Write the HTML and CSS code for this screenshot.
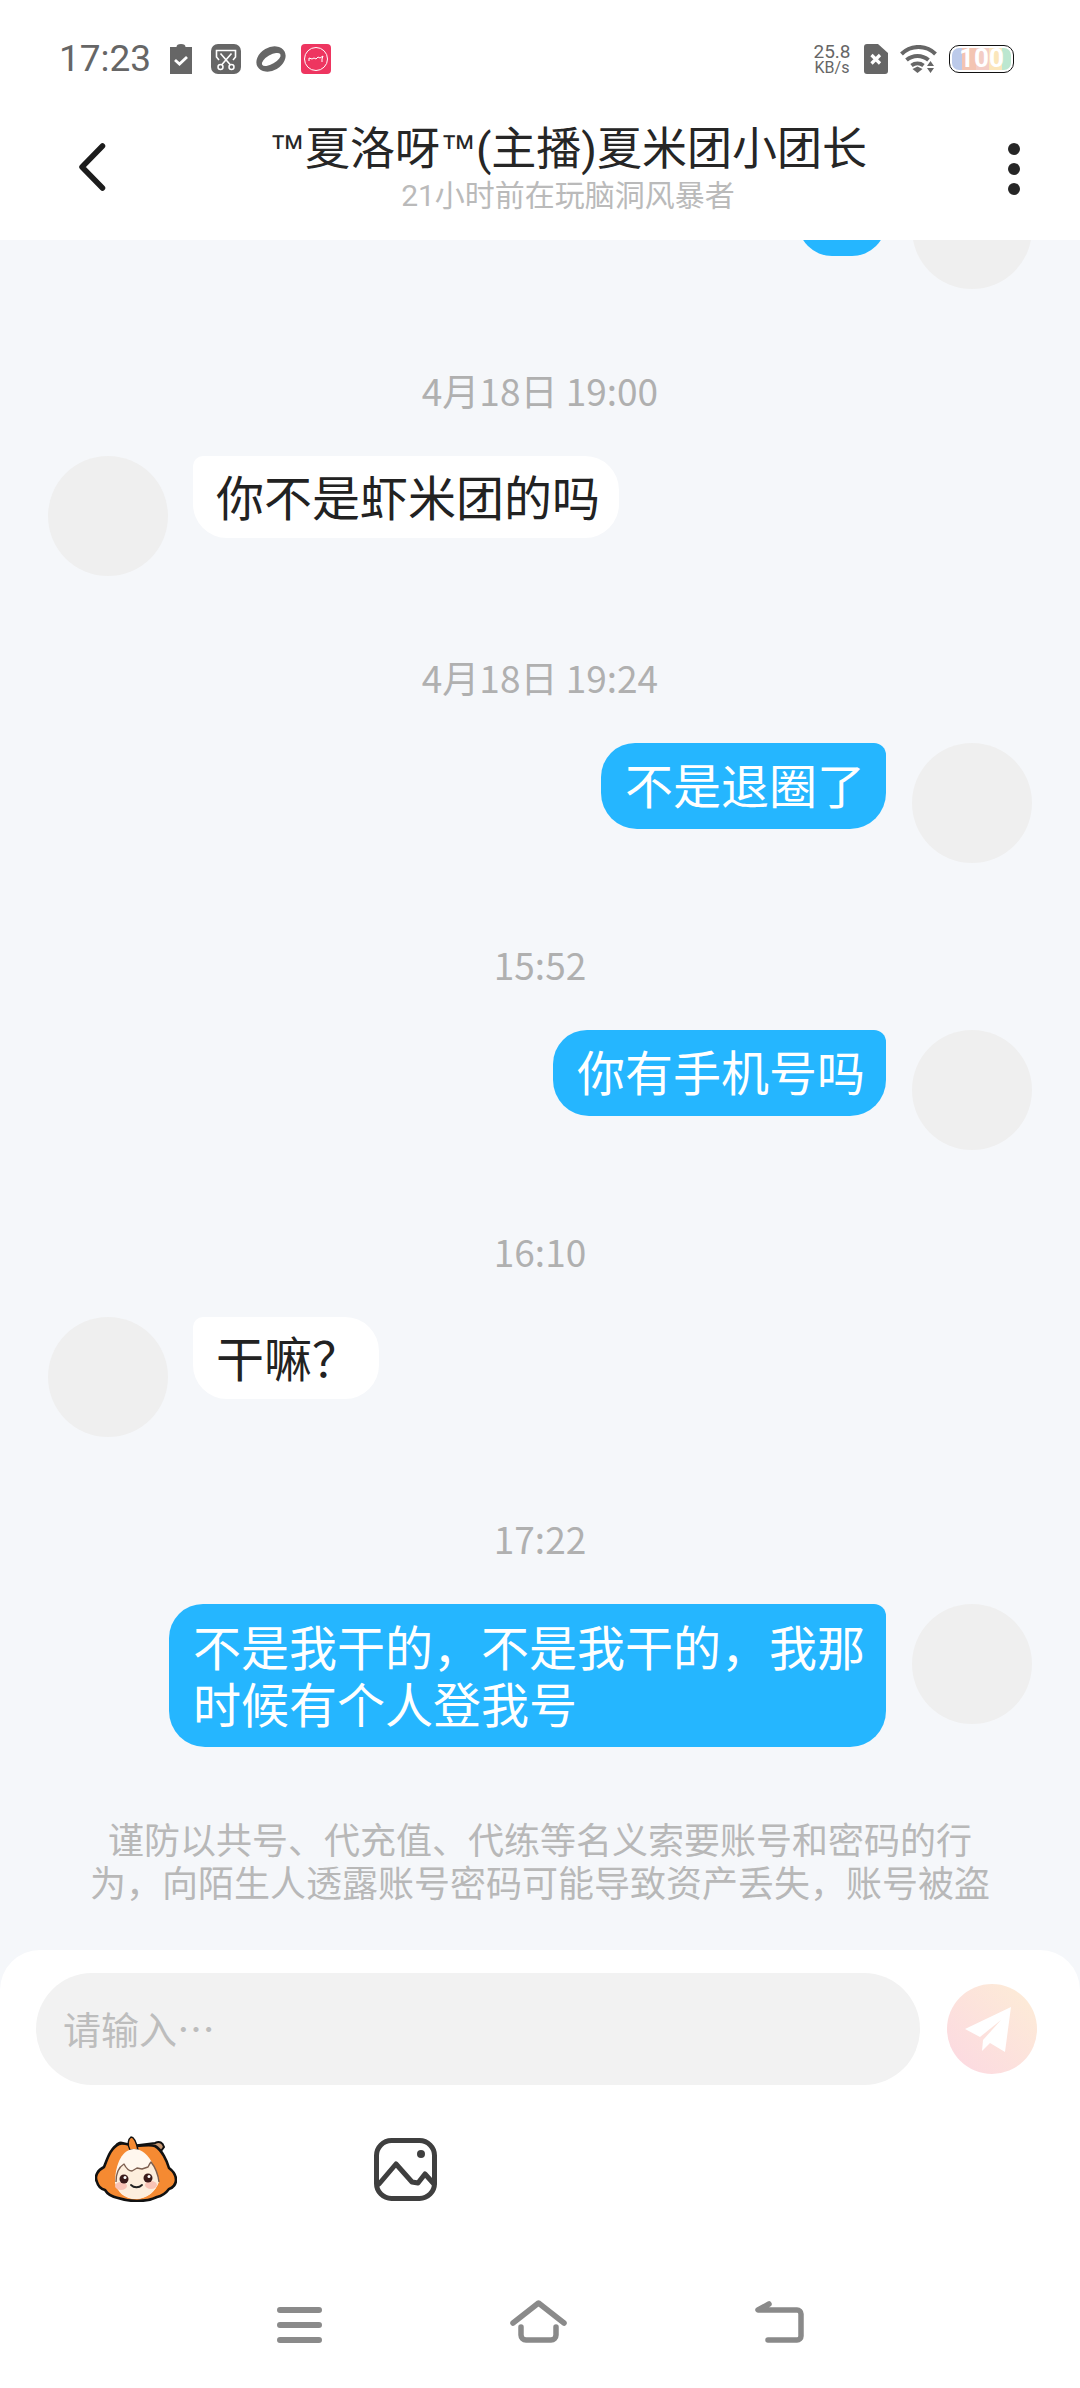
FILE: index.html
```html
<!DOCTYPE html>
<html lang="zh">
<head>
<meta charset="utf-8">
<title>Chat</title>
<link rel="stylesheet" href="styles.css">
</head>
<body>
<div class="app">
  <header class="top">
    <div class="status">
      <div class="status-left">
        <span class="clock">17:23</span>
        <svg class="ic" width="22" height="30" viewBox="0 0 22 30"><path d="M0 3h6.500a4.500 3 0 0 1 9 0H22v27H0z" fill="#666"/><path d="M5 16l4.500 4L17 13" fill="none" stroke="#fff" stroke-width="2.800"/></svg>
        <svg class="ic gap-l" width="30" height="30" viewBox="0 0 30 30"><rect width="30" height="30" rx="7" fill="#666"/><path d="M8 16l-2.500-3V6.500h19V13L22 16M9.500 9.500L19.500 21M20.500 9.500L10.500 21" fill="none" stroke="#fff" stroke-width="1.600"/><circle cx="9.500" cy="23" r="2.500" fill="#666" stroke="#fff" stroke-width="1.500"/><circle cx="20.500" cy="23" r="2.500" fill="#666" stroke="#fff" stroke-width="1.500"/></svg>
        <svg class="ic gap-m" width="30" height="26" viewBox="0 0 30 26"><g transform="rotate(-30 15 13)"><ellipse cx="15" cy="13" rx="15.500" ry="11.500" fill="#666"/><ellipse cx="15" cy="13.500" rx="10.500" ry="4.500" fill="#fff"/></g></svg>
        <svg class="ic gap-m" width="30" height="30" viewBox="0 0 30 30"><rect width="30" height="30" rx="4" fill="#ee3560"/><circle cx="15" cy="15" r="11.500" fill="none" stroke="#fff" stroke-width="1"/><path d="M8 17v-3l3 1 2-1 2 1 2-2 2 1 3-2-1 3v3" fill="none" stroke="#fff" stroke-width="1"/></svg>
      </div>
      <div class="status-right">
        <span class="speed"><b>25.8</b><i>KB/s</i></span>
        <svg width="24" height="30" viewBox="0 0 24 30"><path d="M3 0h11l10 9v18a3 3 0 0 1-3 3H3a3 3 0 0 1-3-3V3a3 3 0 0 1 3-3z" fill="#666"/><path d="M7.500 11l8.500 8.500M16 11l-8.500 8.500" stroke="#fff" stroke-width="3.200"/></svg>
        <svg class="wifi" width="37" height="28" viewBox="0 0 37 28"><path d="M1.500 9a24 24 0 0 1 34 0M6.500 15a17 17 0 0 1 22 0M11.500 20.500a10 10 0 0 1 12 0" fill="none" stroke="#666" stroke-width="4"/><path d="M12.500 24l5-2.500 5 2.500-5 4z" fill="#666"/><path d="M27 21l3.500-5 3.500 5zM27 23l3.500 5 3.500-5z" fill="#666"/></svg>
        <span class="batt"><span class="batt-fill">100</span></span>
      </div>
    </div>
    <div class="nav">
      <svg class="back" width="28" height="48" viewBox="0 0 28 48"><path d="M24.500 3L4 24l20.500 21" fill="none" stroke="#1c1c1c" stroke-width="5.500" stroke-linecap="round" stroke-linejoin="round"/></svg>
      <div class="title">
        <h1><span class="tm">™</span>夏洛呀<span class="tm">™</span>(主播)夏米团小团长</h1>
        <p>21小时前在玩脑洞风暴者</p>
      </div>
      <div class="more"><span></span><span></span><span></span></div>
    </div>
  </header>

  <main class="chat">
    <div class="clip">
      <div class="msg me"><div class="bubble stub"></div><div class="avatar"></div></div>
    </div>
    <div class="time">4月18日 19:00</div>
    <div class="msg other"><div class="avatar"></div><div class="bubble">你不是虾米团的吗</div></div>
    <div class="time">4月18日 19:24</div>
    <div class="msg me"><div class="bubble">不是退圈了</div><div class="avatar"></div></div>
    <div class="time">15:52</div>
    <div class="msg me"><div class="bubble">你有手机号吗</div><div class="avatar"></div></div>
    <div class="time">16:10</div>
    <div class="msg other"><div class="avatar"></div><div class="bubble">干嘛？</div></div>
    <div class="time">17:22</div>
    <div class="msg me"><div class="bubble wide">不是我干的，不是我干的，我那时候有个人登我号</div><div class="avatar"></div></div>
    <p class="warn">谨防以共号、代充值、代练等名义索要账号和密码的行为，向陌生人透露账号密码可能导致资产丢失，账号被盗</p>
  </main>

  <footer class="bottom">
    <div class="input-row">
      <div class="input">请输入…</div>
      <svg class="send" width="90" height="90" viewBox="0 0 90 90">
        <defs><linearGradient id="sendGrad" x1="0" y1="1" x2="1" y2="0"><stop offset="0" stop-color="#fcd8e2"/><stop offset="1" stop-color="#fdedd6"/></linearGradient></defs>
        <circle cx="45" cy="45" r="45" fill="url(#sendGrad)"/>
        <path d="M64 23L18 45l15 8 21-17-18 20-1 11 8-8 15 9z" fill="#fff"/>
      </svg>
    </div>
    <div class="tools">
      <svg width="82" height="67" viewBox="0 0 82 67">
        <path d="M20 12q4-7 10-3l6 2 24-3q7-3 9 4l-3 4z" fill="#c99a74" stroke="#111" stroke-width="2"/>
        <path d="M24 9C15 13 12 25 9 32 3 35-1 41 2 47c1 4 4 7 8 8 3 5 8 7 13 8 6 2 12 3 19 3s14-1 20-4c5-1 9-4 12-8 4-1 7-5 7-9 0-5-3-9-7-12-2-7-7-18-14-22-6-2-12 0-18 0S29 7 24 9z" fill="#f58a32" stroke="#111" stroke-width="2.600" stroke-linejoin="round"/>
        <path d="M35 15c-3-5-2-11 1-13 3 0 5 4 7 13z" fill="#f58a32" stroke="#111" stroke-width="1.400"/>
        <path d="M20 48c0-20 8-34 19-34s21 12 24 34c-2 7-10 16-23 16-10 0-18-7-20-16z" fill="#fff7ee"/>
        <path d="M21 47c1 8 9 17 20 17s20-8 23-17c-1-7-4-15-8-20-1 1-2 3-3 5l-6 2-5-1-5 3c-3 0-6-3-8-7-5 3-8 10-8 18z" fill="#fdeedd"/>
        <path d="M21 47c0-8 3-15 8-18 2 4 5 7 8 7l5-3 5 1 6-2c1-2 2-4 3-5 4 5 7 12 8 20" fill="none" stroke="#7d5f50" stroke-width="1.400" stroke-linejoin="round"/>
        <ellipse cx="26" cy="51" rx="6" ry="4" fill="#f9c3b6"/><ellipse cx="56" cy="50" rx="6" ry="4" fill="#f9c3b6"/>
        <circle cx="29" cy="44" r="4.500" fill="#3a1a1a"/><circle cx="53" cy="43" r="4.500" fill="#3a1a1a"/>
        <circle cx="30" cy="42.500" r="1.500" fill="#fff"/><circle cx="54" cy="41.500" r="1.500" fill="#fff"/>
        <path d="M36 50c3 3 8 3 11 0" fill="none" stroke="#222" stroke-width="1.800" stroke-linecap="round"/>
      </svg>
      <svg class="img-ic" width="63" height="63" viewBox="0 0 63 63"><rect x="2.500" y="2.500" width="58" height="58" rx="15" fill="none" stroke="#3f3f3f" stroke-width="5"/><path d="M5 46L22 26l16 18 6 1 7-9 9 10" fill="none" stroke="#3f3f3f" stroke-width="5" stroke-linejoin="round" stroke-linecap="round"/><circle cx="47" cy="16" r="4" fill="#3f3f3f"/></svg>
    </div>
    <nav class="sysnav">
      <svg width="45" height="36" viewBox="0 0 45 36"><path d="M3 3h39M3 18h39M3 33h39" stroke="#8a8a8a" stroke-width="6" stroke-linecap="round"/></svg>
      <svg width="57" height="43" viewBox="0 0 57 43"><path d="M3 23L28.500 3 54 23M11 27v8a5 5 0 0 0 5 5h25a5 5 0 0 0 5-5v-8" fill="none" stroke="#8a8a8a" stroke-width="5.500" stroke-linecap="round" stroke-linejoin="round"/></svg>
      <svg width="49" height="42" viewBox="0 0 49 42"><path d="M14 3L3 9h39a4 4 0 0 1 4 4v22a4 4 0 0 1-4 4H13" fill="none" stroke="#8a8a8a" stroke-width="5.500" stroke-linecap="round" stroke-linejoin="round"/></svg>
    </nav>
  </footer>
</div>
</body>
</html>
```
FILE: styles.css
```css
* { box-sizing: border-box; margin: 0; padding: 0; }
html, body { width: 1080px; height: 2388px; overflow: hidden; }
body { font-family: "Noto Sans CJK SC", Roboto, sans-serif; background: #f5f7fa; }
.app { width: 1080px; height: 2388px; display: flex; flex-direction: column; }

.top { height: 240px; background: #fff; flex: none; position: relative; z-index: 2; }
.status { height: 115px; padding: 44px 66px 0 59px; display: flex; justify-content: space-between; align-items: flex-start; }
.status-left, .status-right { display: flex; align-items: center; height: 30px; }
.clock { font: 37px/30px Roboto, sans-serif; color: #666; margin-right: 20px; width: 91px; }
.gap-l { margin-left: 19px; }
.gap-m { margin-left: 15px; }
.speed { display: flex; flex-direction: column; align-items: center; width: 40px; color: #666; font-family: Roboto, sans-serif; margin-right: 12px; }
.speed b { font-weight: 400; font-size: 19px; line-height: 16px; }
.speed i { font-style: normal; font-size: 16px; line-height: 15px; }
.wifi { margin-left: 12px; }
.batt { margin-left: 12px; width: 65px; height: 28px; border: 1.500px solid #111; border-radius: 10px; padding: 2px; display: flex; }
.batt-fill { flex: 1; border-radius: 7px; text-align: center; font: 700 26px/21px Roboto, sans-serif; color: #fff; background: linear-gradient(90deg, #bccaea 0 17%, #f3c4b2 17% 40%, #f3cdc6 40% 62%, #fbe6bb 62% 84%, #bce7d0 84%); }

.nav { height: 125px; padding: 0 60px 0 78px; display: flex; align-items: flex-start; }
.back { margin-top: 28px; flex: none; }
.title { flex: 1; min-width: 0; padding: 10px 0 0 22px; text-align: center; font-family: Roboto, "Noto Sans CJK SC", sans-serif; }
.title h1 { font-weight: 400; font-size: 45px; line-height: 50px; height: 50px; color: #262626; }
.tm { font-family: "Liberation Sans", sans-serif; font-size: 36px; line-height: 0; vertical-align: 5px; }
.title p { font-size: 30px; line-height: 36px; color: #bababa; margin-top: 3px; }
.more { margin-top: 28px; flex: none; display: flex; flex-direction: column; gap: 8px; }
.more span { width: 12px; height: 12px; border-radius: 50%; background: #262626; }

.chat { flex: 1; min-height: 0; padding: 0 48px; display: flex; flex-direction: column; }
.clip { height: 49px; overflow: hidden; flex: none; }
.clip .msg { margin-top: -71px; }
.time { text-align: center; font-size: 37px; line-height: 44px; color: #b0b0b0; margin-top: 79px; margin-bottom: 44px; flex: none; }
.msg { display: flex; align-items: flex-start; gap: 26px; flex: none; }
.msg.other { gap: 25px; }
.msg.me { justify-content: flex-end; }
.avatar { width: 120px; height: 120px; border-radius: 50%; background: #efefef; flex: none; }
.bubble { font-size: 48px; line-height: 57px; padding: 10.500px 19px 14.500px 23px; border-radius: 10px 34px 34px 34px; background: #fff; color: #222; }
.me .bubble { background: #25b6ff; color: #fff; padding: 12px 21px 17px 24px; border-radius: 34px 12px 36px 36px; }
.me .wide { width: 717px; padding-top: 13px; padding-bottom: 16px; }
.clip .stub { width: 88px; height: 87px; border-radius: 34px; padding: 0; }
.warn { text-align: center; font-size: 36px; line-height: 43px; color: #b8b8b8; margin-top: 70px; padding: 0 42px; }

.bottom { height: 438px; background: #fff; flex: none; border-radius: 40px 40px 0 0; padding: 23px 36px 0; display: flex; flex-direction: column; }
.input-row { display: flex; align-items: center; }
.input { flex: 1; height: 112px; border-radius: 56px; background: #f2f2f2; font-size: 38px; line-height: 110px; padding-left: 27px; color: #bdbdbd; }
.send { flex: none; margin: 0 7px 0 27px; }
.tools { display: flex; align-items: flex-start; margin-top: 50px; padding-left: 59px; height: 165px; flex: none; }
.img-ic { margin-left: 197px; margin-top: 3px; }
.sysnav { display: flex; align-items: flex-end; justify-content: space-between; height: 43px; padding: 0 240px 0 241px; }
```
